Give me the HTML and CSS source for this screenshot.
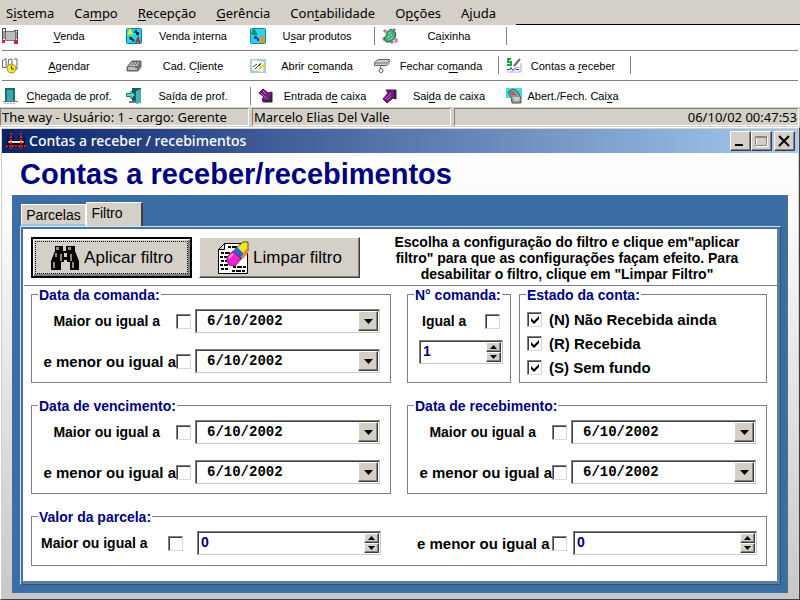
FILE: index.html
```
<!DOCTYPE html>
<html lang="pt-BR">
<head>
<meta charset="utf-8">
<title>Contas a receber / recebimentos</title>
<link rel="stylesheet" href="styles.css">
</head>
<body>
<nav class="menu">
  <a href="#">S<u>i</u>stema</a><a href="#">Ca<u>m</u>po</a><a href="#"><u>R</u>ecepção</a><a href="#"><u>G</u>erência</a><a href="#">Con<u>t</u>abilidade</a><a href="#">O<u>p</u>ções</a><a href="#">A<u>j</u>uda</a>
  <span class="menu-rest"></span>
</nav>

<div class="toolbars">
  <div class="toolbar">
    <button class="tool" type="button"><svg viewBox="0 0 16 16"><path fill="#bbb" stroke="#777" d="M3.500 3.500h10v9h-10z"/><path stroke="#446" fill="none" d="M0 .5h4M.5 1v12M3.500 1v3M12 2.500h4M15.500 2v11M3 12l-2 2"/><path fill="#c23" d="M0 12h3v3H0zM12 12h4v4h-4z"/><path fill="#a9a" d="M1 3h2v8H1zM14 4h1v7h-1z"/></svg><span><u>V</u>enda</span></button>
    <button class="tool" type="button"><svg viewBox="0 0 16 16"><rect x=".5" y=".5" width="15" height="15" rx="1" fill="#1fd8ee" stroke="#127c94"/><path fill="none" stroke="#e8ec20" stroke-width="2" d="M2 7l2-5 2 5M3 5h3"/><path fill="none" stroke="#a33b45" stroke-width="2" d="M10 15l2-5 2 5M11 13h3"/><path fill="#123" d="M9 2h2v2h2v3h-3V5H8zM3 9h3l1 2 2 1-2 2-1-2H4z"/></svg><span>Venda <u>i</u>nterna</span></button>
    <button class="tool" type="button"><svg viewBox="0 0 16 16"><rect x=".5" y=".5" width="15" height="15" rx="1" fill="#27d5f2" stroke="#1486a4"/><path fill="none" stroke="#169058" stroke-width="2" d="M2 6l2-4 2 4M2 6h5"/><path fill="#1438d0" d="M4 8h3v2h2v3H7v-2H4z"/><path fill="none" stroke="#e39a20" stroke-width="2" d="M10 15V11l2-3 2 3v4M10 13h4"/></svg><span>U<u>s</u>ar produtos</span></button>
    <i class="sep"></i>
    <button class="tool" type="button"><svg viewBox="0 0 16 16"><path fill="#fff" stroke="#b4476d" d="M2 2h2v2H2zM11 1h2v2h-2zM1 10h2v2H1zM13 11h2v3h-2zM9 13h2v2H9z"/><path fill="#3fae78" stroke="#1d6d4c" d="M5 4l4-3 5 4-1 5-5 4H4L2 10l2-2z"/><path stroke="#9fe0ba" fill="none" d="M6 6l3-2M5 10l5-4M7 12l4-3"/></svg><span>Ca<u>i</u>xinha</span></button>
    <i class="sep"></i>
  </div>
  <div class="toolbar">
    <button class="tool" type="button"><svg viewBox="0 0 16 16"><path fill="#fff" stroke="#666" d="M.5 2.500L4 .5v9H.500zM6.500 1.500L10 1v8H6zM12 1h3v10h-3"/><circle cx="9.500" cy="10.500" r="4.500" fill="#f6e62c" stroke="#9b8b18"/><path d="M9.500 7.500v3.500H12" fill="none" stroke="#333"/></svg><span><u>A</u>gendar</span></button>
    <button class="tool" type="button"><svg viewBox="0 0 16 16"><path fill="#777" stroke="#666" d="M1 9l5-6 9 0v6l-3 4H1z"/><path fill="#bbb" d="M2 9h9v3H2zM6 4l7 0-2 4H3z"/><path stroke="#555" d="M6 7l3-4M9 7l3-4M9 9.500h2"/></svg><span>Cad. C<u>l</u>iente</span></button>
    <button class="tool" type="button"><svg viewBox="0 0 16 16"><path fill="#a9cdd3" d="M0 1h16v14H0z"/><path fill="#fff" d="M2 2l12 2-1 10-11-2z"/><path stroke="#333" fill="none" d="M3 9l4-3M5 11l5-5M9 8l2-3"/><path stroke="#e8cf22" stroke-width="2" d="M9 11l6-5"/></svg><span>Abrir c<u>o</u>manda</span></button>
    <button class="tool" type="button"><svg viewBox="0 0 16 16"><path fill="#ccc" stroke="#666" d="M.5 4.500L4 1.500h12v3l-3 3H.500z"/><path stroke="#777" fill="none" d="M1 5h12l3-3M6.500 8v3"/><circle cx="7" cy="12.500" r="2" fill="#fff" stroke="#555"/></svg><span>Fechar co<u>m</u>anda</span></button>
    <i class="sep"></i>
    <button class="tool" type="button"><svg viewBox="0 0 16 16"><path fill="none" stroke="#19a834" stroke-width="2" d="M5 1H2v3h3v3H1"/><path d="M8 8l6-7" stroke="#666b50" stroke-width="2"/><path fill="none" stroke="#b5aecf" d="M9 9.500h6M15 5v9H1"/><path fill="none" stroke="#3130a0" d="M1 11.500h3l1-2 2 3 2-2 1 1h3"/></svg><span>Contas a <u>r</u>eceber</span></button>
    <i class="sep"></i>
  </div>
  <div class="toolbar">
    <button class="tool" type="button"><svg viewBox="0 0 16 16"><path fill="#186f72" d="M3 0h10v13H3z"/><path fill="#39aaa9" d="M5 2h6v11H5z"/><path fill="#777" d="M1 13h15v1H1z"/><path stroke="#aaa" d="M2 15.500h12" stroke-dasharray="2 1"/></svg><span><u>C</u>hegada de prof.</span></button>
    <button class="tool" type="button"><svg viewBox="0 0 16 16"><path fill="#155e60" d="M6 0h9v14H6z"/><path fill="#49b3b2" d="M10 3l5-2v14l-5 1z"/><path fill="#6cd1d3" stroke="#187a7d" d="M.5 5.500H5V3l4 4-4 4V8.500H.500z"/><path fill="#777" d="M3 13h7v2H3z"/></svg><span>Sa<u>í</u>da de prof.</span></button>
    <i class="sep"></i>
    <button class="tool" type="button"><svg viewBox="0 0 16 16"><path fill="#7b1b87" stroke="#45104d" d="M1 5l4-4 5 4 4-1v10H5l-1-3 2-2z"/><path stroke="#c069c8" fill="none" d="M3 5l6 6M5 3l3 3"/><path fill="#312333" d="M7 12h5V7h2v7H6z"/></svg><span>Entrada d<u>e</u> caixa</span></button>
    <button class="tool" type="button"><svg viewBox="0 0 16 16"><path fill="#751881" stroke="#45104d" d="M4 2h10v9l-3-1-6 5-4-4 5-6z"/><path stroke="#c069c8" fill="none" d="M3 11l6-6M5 12l4-4"/><path fill="#312333" d="M12 2h2v9h-2z"/></svg><span>Sai<u>d</u>a de caixa</span></button>
    <button class="tool" type="button"><svg viewBox="0 0 16 16"><path fill="#39e2e5" d="M0 0h16v10H0z"/><path fill="#999" stroke="#555" d="M2 4l5-3 5 3 3 6v5H6L5 9z"/><path stroke="#fff" fill="none" d="M7 10h7M8 12h5"/><path stroke="#a4433c" d="M4 4l5 1M5 6l5 1"/></svg><span>Abert./Fech. Cai<u>x</u>a</span></button>
  </div>
</div>

<div class="status">
  <div class="panel user">The way - Usuário: 1 - cargo: Gerente</div>
  <div class="panel owner">Marcelo Elias Del Valle</div>
  <div class="panel clock">06/10/02 00:47:53</div>
</div>

<main class="window">
  <header class="titlebar">
    <svg class="app-icon" viewBox="0 0 20 16"><path fill="#111" d="M1 7h18v7H1z"/><path fill="#ddd" d="M2 8h16v2H2z"/><path fill="none" stroke="#e01818" stroke-width="2" stroke-dasharray="2 1" d="M5 0v16M15 0v16M0 13h20"/><path stroke="#111" d="M2 2v10M18 2v10M7 3v5M13 3v5"/></svg>
    <span class="caption">Contas a receber / recebimentos</span>
    <button class="wbtn" type="button" aria-label="Minimizar"><svg viewBox="0 0 16 14"><path fill="#000" d="M3 10h8v2H3z"/></svg></button>
    <button class="wbtn" type="button" aria-label="Maximizar"><svg viewBox="0 0 16 14"><path fill="none" stroke="#fff" d="M3.500 3.500h11v9h-11z"/><path fill="none" stroke="#888" d="M2.500 2.500h11v9h-11zM3 3.500h10"/></svg></button>
    <button class="wbtn close" type="button" aria-label="Fechar"><svg viewBox="0 0 16 14"><path stroke="#000" stroke-width="2" d="M3 2l10 10M13 2L3 12"/></svg></button>
  </header>

  <div class="client">
    <h1>Contas a receber/recebimentos</h1>
    <section class="frame">
      <div class="tabs">
        <button class="tab" type="button">Parcelas</button>
        <button class="tab active" type="button">Filtro</button>
      </div>
      <form class="page">
        <div class="actions">
          <button class="action default" type="button"><svg viewBox="0 0 30 26"><path d="M5 1h8v5h3V1h9v5l4 10v9h-9v-8h-3v-2h-3v2h-3v8H1v-9L5 6z"/><path fill="#8b8b82" d="M6 2h3v3H6zM18 2h3v3h-3zM5 8h2v4H5zM10 9h2v7h-2zM20 9h2v7h-2zM3 17h2v6H3zM22 17h2v6h-2z"/><path fill="#d4d0c8" d="M14 8h3v4h-3z"/></svg>Aplicar filtro</button>
          <button class="action" type="button"><svg class="doc" viewBox="0 0 32 34"><path fill="#fff" stroke="#000" d="M7.500 2.500h23v30h-29v-24z"/><path fill="#ddd" stroke="#000" d="M7.500 2.500v6h-6z"/><path stroke="#000" stroke-width="2" stroke-dasharray="3 1 5 1" d="M11 6h9M4 12h9M3 16h8M4 20h7M3 24h8M16 26h13M4 28h7M15 30h13"/><path fill="#f3e51e" stroke="#554f12" d="M18 8L26 1h5v9l-7 8z"/><path fill="#2864d6" d="M16 10l4-4 8 8-4 5z"/><path fill="#ed22c7" stroke="#8c1370" d="M10 16l6-6 8 8-6 7-6-1-2-4z"/><path fill="none" stroke="#ff9cea" stroke-width="2" d="M12 17l4-4"/><path fill="#e58b2b" d="M29 8l2-1v5l-5 6-2-2z"/></svg>Limpar filtro</button>
          <p>Escolha a configuração do filtro e clique em"aplicar filtro" para que as configurações façam efeito. Para desabilitar o filtro, clique em "Limpar Filtro"</p>
        </div>

        <div class="groups">
          <fieldset class="dates">
            <legend>Data da comanda:</legend>
            <div class="row"><label class="from" for="c1">Maior ou igual a</label><input type="checkbox" id="c1"><span class="combo"><select aria-label="Data inicial da comanda"><option>6/10/2002</option></select><i></i></span></div>
            <div class="row"><label for="c2">e menor ou igual a</label><input type="checkbox" id="c2"><span class="combo"><select aria-label="Data final da comanda"><option>6/10/2002</option></select><i></i></span></div>
          </fieldset>

          <div class="pair">
            <fieldset class="number">
              <legend>N° comanda:</legend>
              <div class="equal"><label for="n1">Igual a</label><input type="checkbox" id="n1"></div>
              <span class="spin"><input type="text" value="1" aria-label="Número da comanda"><span class="arrows"><button type="button" aria-label="Mais"></button><button type="button" class="down" aria-label="Menos"></button></span></span>
            </fieldset>
            <fieldset class="states">
              <legend>Estado da conta:</legend>
              <label><input type="checkbox" checked>(N) Não Recebida ainda</label>
              <label><input type="checkbox" checked>(R) Recebida</label>
              <label><input type="checkbox" checked>(S) Sem fundo</label>
            </fieldset>
          </div>

          <fieldset class="dates">
            <legend>Data de vencimento:</legend>
            <div class="row"><label class="from" for="v1">Maior ou igual a</label><input type="checkbox" id="v1"><span class="combo"><select aria-label="Vencimento inicial"><option>6/10/2002</option></select><i></i></span></div>
            <div class="row"><label for="v2">e menor ou igual a</label><input type="checkbox" id="v2"><span class="combo"><select aria-label="Vencimento final"><option>6/10/2002</option></select><i></i></span></div>
          </fieldset>

          <fieldset class="dates">
            <legend>Data de recebimento:</legend>
            <div class="row"><label class="from" for="r1">Maior ou igual a</label><input type="checkbox" id="r1"><span class="combo"><select aria-label="Recebimento inicial"><option>6/10/2002</option></select><i></i></span></div>
            <div class="row"><label for="r2">e menor ou igual a</label><input type="checkbox" id="r2"><span class="combo"><select aria-label="Recebimento final"><option>6/10/2002</option></select><i></i></span></div>
          </fieldset>

          <fieldset class="values">
            <legend>Valor da parcela:</legend>
            <div class="value low"><label for="p1">Maior ou igual a</label><input type="checkbox" id="p1"><span class="spin"><input type="text" value="0" aria-label="Valor mínimo"><span class="arrows"><button type="button" aria-label="Mais"></button><button type="button" class="down" aria-label="Menos"></button></span></span></div>
            <div class="value"><label for="p2">e menor ou igual a</label><input type="checkbox" id="p2"><span class="spin"><input type="text" value="0" aria-label="Valor máximo"><span class="arrows"><button type="button" aria-label="Mais"></button><button type="button" class="down" aria-label="Menos"></button></span></span></div>
          </fieldset>
        </div>
      </form>
    </section>
  </div>
</main>
</body>
</html>
```

FILE: styles.css
```
:root {
  --face: #d4d0c8;
  --shade: #808080;
  --dark: #404040;
  --blue: #3b6ea5;
  --navy: #000080;
}

* {
  box-sizing: border-box;
}

body {
  margin: 0;
  min-height: 100vh;
  display: flex;
  flex-direction: column;
  background: var(--face);
  color: #000;
  font-family: "Liberation Sans", sans-serif;
}

button,
input,
select {
  margin: 0;
  padding: 0;
  border: 0;
  border-radius: 0;
  background: none;
  color: inherit;
  font: inherit;
}

u {
  text-underline-offset: 2px;
}

/* Menu bar */
.menu {
  display: flex;
  height: 25px;
  padding-left: 6px;
  font: 13px/26px "Noto Sans", sans-serif;
}

.menu a {
  margin-right: 20px;
  color: #000;
  text-decoration: none;
  white-space: nowrap;
}

.menu-rest {
  flex: 1;
  border-bottom: 1px solid #000;
}

/* Toolbars */
.toolbars {
  padding: 0 2px;
  background: #fff;
}

.toolbar {
  display: flex;
  height: 30px;
  padding: 3px 0;
  border-bottom: 1px solid var(--shade);
}

.toolbar:first-child {
  height: 26px;
  padding: 0 0 3px;
}

.toolbar:last-child {
  height: 26px;
  padding: 4px 0 0;
  border: 0;
}

.tool {
  display: flex;
  align-items: center;
  width: 124px;
  padding-right: 6px;
  font-size: 11px;
  white-space: nowrap;
}

.tool svg {
  width: 16px;
  height: 16px;
  flex: none;
}

.tool span {
  flex: 1;
  text-align: center;
}

.sep {
  width: 8px;
  height: 18px;
  margin-top: 2px;
  border-left: 1px solid var(--shade);
}

/* Status bar */
.status {
  display: flex;
  gap: 3px;
  height: 20px;
  padding: 1px 1px 2px 0;
  font: 13px/17px "Noto Sans", sans-serif;
  white-space: nowrap;
}

.panel {
  height: 18px;
  padding: 0 1px;
  border: 1px solid;
  border-color: var(--shade) #fff #fff var(--shade);
}

.user {
  width: 249px;
}

.owner {
  width: 199px;
}

.clock {
  flex: 1;
  text-align: right;
}

/* Window */
.window {
  flex: 1;
  display: flex;
  flex-direction: column;
  border: 1px solid;
  border-color: #fff var(--dark) var(--dark) #fff;
  padding: 1px 1px 0;
}

.titlebar {
  display: flex;
  align-items: center;
  height: 24px;
  padding: 0 3px 0 4px;
  background: linear-gradient(90deg, #0a246a, #a6caf0);
  color: #fff;
}

.app-icon {
  width: 20px;
  height: 16px;
  margin-right: 3px;
}

.caption {
  flex: 1;
  font: 500 14px/24px "Noto Sans", sans-serif;
}

.wbtn,
.arrows button,
.combo i {
  background-color: var(--face);
  border: 1px solid;
  border-color: #fff var(--dark) var(--dark) #fff;
  box-shadow: inset -1px -1px var(--shade);
}

.wbtn {
  width: 21px;
  height: 20px;
}

.wbtn svg {
  display: block;
  width: 16px;
  height: 14px;
  margin: 1px;
}

.close {
  margin-left: 2px;
}

.client {
  flex: 1;
  padding: 3px 10px 4px;
  background: linear-gradient(#fff, #fafafa 15%, #c8c8c8);
}

h1 {
  margin: 0 0 3px;
  padding-left: 8px;
  color: var(--navy);
  font-size: 29px;
  line-height: 36px;
}

.frame {
  padding: 7px 6px 8px 8px;
  background: var(--blue);
  border-right: 1px solid #5a6a80;
}

.tabs {
  display: flex;
  align-items: flex-end;
  height: 24px;
  padding-left: 1px;
}

.tab {
  width: 65px;
  height: 22px;
  background: var(--face);
  border: 1px solid #fff;
  border-bottom: 2px solid #9cc0e0;
  font-size: 14px;
  line-height: 20px;
}

.tab.active {
  width: 57px;
  height: 24px;
  padding: 0 14px 3px 0;
  border-right: 2px solid var(--dark);
  border-bottom: 0;
}

.page {
  border: 1px solid;
  border-color: #cfe6fa #31536f #31536f #cfe6fa;
  padding: 0 13px 18px 8px;
  background: #fff;
  box-shadow: inset 2px 2px #4a7195, inset -3px -3px #5d7f9f;
}

.actions {
  display: flex;
  align-items: center;
  gap: 7px;
  height: 59px;
  margin: 0 -10px 0 -5px;
  padding: 3px 24px 0 7px;
  border-bottom: 1px solid var(--shade);
}

.action {
  display: flex;
  align-items: center;
  justify-content: center;
  flex: none;
  width: 161px;
  height: 41px;
  gap: 4px;
  background: var(--face);
  border: 1px solid;
  border-color: #fff var(--dark) var(--dark) #fff;
  box-shadow: inset -1px -1px var(--shade);
  font-size: 17px;
}

.action svg {
  width: 30px;
  height: 26px;
}

.action .doc {
  width: 32px;
  height: 34px;
}

.default {
  border: 2px solid #000;
  box-shadow: inset 1px 1px #fff, inset -2px -2px var(--shade);
  outline: 1px dotted #000;
  outline-offset: -5px;
}

.actions p {
  flex: 1;
  margin: 0 0 0 14px;
  font-size: 14px;
  font-weight: bold;
  line-height: 16px;
  text-align: center;
}

/* Filter groups */
.groups {
  display: grid;
  grid-template-columns: 1fr 1fr;
  gap: 14px 16px;
  padding-left: 2px;
  font-size: 15px;
  font-weight: bold;
}

fieldset {
  min-width: 0;
  margin: 0;
  border: 1px solid var(--shade);
  padding: 7px 10px 9px;
}

legend {
  height: 16px;
  margin-left: -4px;
  padding: 0 1px;
  color: var(--navy);
  font-size: 14px;
  line-height: 18px;
  white-space: nowrap;
}

label {
  white-space: nowrap;
}

.row {
  display: grid;
  grid-template-columns: 134px 15px 1fr;
  align-items: center;
  height: 24px;
}

.row + .row {
  margin-top: 16px;
}

.row label {
  text-align: right;
}

.row .from {
  padding-right: 16px;
}

.from,
.low label,
.equal {
  font-size: 14px;
}

input[type="checkbox"] {
  appearance: none;
  flex: none;
  width: 15px;
  height: 15px;
  background: #fff;
  border: 1px solid;
  border-color: var(--shade) #d8d8d8 #d8d8d8 var(--shade);
  box-shadow: inset 1px 1px var(--dark);
}

input[type="checkbox"]:checked {
  background: #fff url("data:image/svg+xml,%3Csvg xmlns='http://www.w3.org/2000/svg' viewBox='0 0 13 13'%3E%3Cpath d='M3 5l3 3 5-5v3L6 11 3 8z'/%3E%3C/svg%3E");
}

.combo,
.spin {
  display: grid;
  height: 24px;
  background: #fff;
  border: 1px solid;
  border-color: var(--shade) #c8c8c8 #c8c8c8 var(--shade);
  box-shadow: inset 1px 1px var(--dark);
  padding: 1px;
}

.combo {
  margin-left: 4px;
}

.combo select {
  grid-area: 1 / 1;
  appearance: none;
  width: 100%;
  padding-left: 10px;
  font: bold 14px/20px "Liberation Mono", monospace;
}

.combo i {
  grid-area: 1 / 1;
  justify-self: end;
  width: 20px;
  pointer-events: none;
  background-image: url("data:image/svg+xml,%3Csvg xmlns='http://www.w3.org/2000/svg' width='9' height='5'%3E%3Cpath d='M0 0h9L4.500 5z'/%3E%3C/svg%3E");
  background-position: center;
  background-repeat: no-repeat;
}

.spin {
  grid-template-columns: 1fr 15px;
}

.spin input {
  width: 100%;
  min-width: 0;
  padding: 0 0 2px 2px;
  color: var(--navy);
  font-size: 14px;
  line-height: 18px;
}

.arrows {
  display: grid;
  grid-template-rows: 1fr 1fr;
}

.arrows button {
  background-image: url("data:image/svg+xml,%3Csvg xmlns='http://www.w3.org/2000/svg' width='7' height='4'%3E%3Cpath d='M0 4h7L3.500 0z'/%3E%3C/svg%3E");
  background-position: center;
  background-repeat: no-repeat;
}

.arrows .down {
  background-image: url("data:image/svg+xml,%3Csvg xmlns='http://www.w3.org/2000/svg' width='7' height='4'%3E%3Cpath d='M0 0h7L3.500 4z'/%3E%3C/svg%3E");
}

.pair {
  display: grid;
  grid-template-columns: 104px 1fr;
  gap: 8px;
}

.number {
  padding: 7px 7px 9px 11px;
}

.number legend {
  margin-left: -5px;
}

.equal {
  display: flex;
  align-items: center;
  justify-content: space-between;
  height: 24px;
  margin-bottom: 7px;
  padding: 0 3px;
}

.states {
  padding: 5px 7px 0;
}

.states legend {
  margin-left: -1px;
}

.states label {
  display: flex;
  align-items: center;
  gap: 7px;
  height: 24px;
}

.values {
  grid-column: 1 / -1;
  display: grid;
  grid-template-columns: 1fr 1fr;
  gap: 36px;
  padding: 7px 9px 10px;
}

.values legend {
  margin-left: -3px;
}

.value {
  display: grid;
  grid-template-columns: 135px 15px 1fr;
  align-items: center;
}

.value .spin {
  margin-left: 6px;
}

.low {
  grid-template-columns: 127px 15px 1fr;
}

.low .spin {
  margin-left: 14px;
}
```
